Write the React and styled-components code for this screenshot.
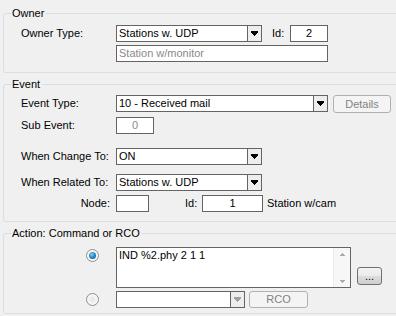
import React from 'react';
import styled, { createGlobalStyle } from 'styled-components';

const GlobalStyle = createGlobalStyle`
  html, body {
    margin: 0;
    padding: 0;
    background: #f0f0f0;
    overflow: hidden;
  }
  body {
    font-family: "Liberation Sans", Arial, sans-serif;
    font-size: 11px;
    color: #000;
  }
`;

const Page = styled.div`
  width: 396px;
  height: 316px;
  padding-top: 13px;
  box-sizing: border-box;
`;

const Group = styled.div`
  margin: ${p => p.$top || 0}px 0 0 3px;
  width: 410px;
  border: 1px solid #d5dfe5;
  border-radius: 3px;
  padding-bottom: ${p => p.$pb}px;
  box-sizing: border-box;
`;

const Legend = styled.div`
  margin: -7px 0 0 7px;
  padding: 0 2px 0 1px;
  height: 13px;
  line-height: 13px;
  width: fit-content;
  background: #f0f0f0;
`;

const Row = styled.div`
  display: flex;
  align-items: ${p => p.$align || 'center'};
  height: ${p => p.$h || 17}px;
  margin-top: ${p => p.$mt || 0}px;
  padding-left: 17px;
`;

const Label = styled.div`
  width: 95px;
  flex: none;
  box-sizing: border-box;
  text-align: ${p => (p.$right ? 'right' : 'left')};
  padding-right: ${p => (p.$right ? 6 : 0)}px;
  line-height: 13px;
`;

const SmallLabel = styled.div`
  width: ${p => p.$w}px;
  margin-left: ${p => p.$ml || 0}px;
  flex: none;
  line-height: 13px;
`;

const Field = styled.div`
  width: ${p => p.$w}px;
  height: 17px;
  margin-left: ${p => p.$ml || 0}px;
  box-sizing: border-box;
  flex: none;
  border: 1px solid #646464;
  background: #fff;
  color: ${p => (p.$disabled ? '#8a8a8a' : '#000')};
  line-height: 15px;
  padding: 0 2px;
  text-align: ${p => (p.$center ? 'center' : 'left')};
  white-space: nowrap;
  overflow: hidden;
`;

const ComboBox = styled.div`
  width: ${p => p.$w}px;
  height: 17px;
  box-sizing: border-box;
  flex: none;
  display: flex;
  border: 1px solid #646464;
  background: #fff;
`;

const ComboText = styled.div`
  flex: 1;
  line-height: 15px;
  padding-left: 2px;
  white-space: nowrap;
  overflow: hidden;
`;

const ComboArrow = styled.div`
  width: 14px;
  flex: none;
  border-left: 1px solid #646464;
  box-sizing: border-box;
  background: #ededed;
  display: flex;
  align-items: center;
  justify-content: center;
`;

const Button = styled.div`
  width: ${p => p.$w}px;
  height: ${p => p.$h || 18}px;
  margin-left: ${p => p.$ml || 0}px;
  align-self: ${p => p.$self || 'auto'};
  margin-top: ${p => p.$mt || 0}px;
  flex: none;
  box-sizing: border-box;
  border: 1px solid ${p => (p.$disabled ? '#adb2b5' : '#707070')};
  border-radius: 3px;
  background: ${p =>
    p.$disabled ? '#f4f4f4' : 'linear-gradient(#f2f2f2, #ebebeb 50%, #dddddd 51%, #cfcfcf)'};
  color: ${p => (p.$disabled ? '#838383' : '#000')};
  text-align: center;
  line-height: ${p => (p.$h || 18) - 2}px;
`;

const Radio = styled.div`
  width: 13px;
  height: 13px;
  box-sizing: border-box;
  border-radius: 50%;
  border: 1px solid #8e8f8f;
  background: radial-gradient(circle at 50% 50%, #e6e6e6 0%, #f6f6f6 60%, #fff 100%);
  margin-left: 65px;
  margin-top: ${p => p.$mt || 0}px;
  flex: none;
  display: flex;
  align-items: center;
  justify-content: center;
`;

const RadioDot = styled.div`
  width: 7px;
  height: 7px;
  border-radius: 50%;
  background: radial-gradient(circle at 40% 35%, #7fd0f5 0%, #2a8ec8 45%, #0b4f86 100%);
`;

const RadioCell = styled.div`
  width: 95px;
  flex: none;
  display: flex;
  align-items: ${p => (p.$top ? 'flex-start' : 'center')};
`;

const TextArea = styled.div`
  width: 235px;
  height: 41px;
  box-sizing: border-box;
  flex: none;
  display: flex;
  border: 1px solid #646464;
  background: #fff;
`;

const TextAreaBody = styled.div`
  flex: 1;
  padding: 1px 2px;
  line-height: 13px;
`;

const ScrollBar = styled.div`
  width: 17px;
  flex: none;
  background: #f7f7f7;
  border-left: 1px solid #ececec;
  display: flex;
  flex-direction: column;
  justify-content: space-between;
  align-items: center;
  padding: 5px 0 4px;
  box-sizing: border-box;
`;

const DownArrow = ({ color = '#000' }) => (
  <svg width="7" height="5" viewBox="0 0 7 5" shapeRendering="crispEdges">
    <rect x="0" y="0" width="7" height="1" fill={color} />
    <rect x="0" y="1" width="7" height="1" fill={color} />
    <rect x="1" y="2" width="5" height="1" fill={color} />
    <rect x="2" y="3" width="3" height="1" fill={color} />
    <rect x="3" y="4" width="1" height="1" fill={color} />
  </svg>
);

const SmallTri = ({ up }) => (
  <svg width="7" height="4" viewBox="0 0 7 4" shapeRendering="crispEdges">
    {up ? (
      <>
        <rect x="3" y="0" width="1" height="1" fill="#a8a8a8" />
        <rect x="2" y="1" width="3" height="1" fill="#a8a8a8" />
        <rect x="1" y="2" width="5" height="1" fill="#a8a8a8" />
      </>
    ) : (
      <>
        <rect x="1" y="1" width="5" height="1" fill="#a8a8a8" />
        <rect x="2" y="2" width="3" height="1" fill="#a8a8a8" />
        <rect x="3" y="3" width="1" height="1" fill="#a8a8a8" />
      </>
    )}
  </svg>
);

const Combo = ({ width, value, disabled }) => (
  <ComboBox $w={width}>
    <ComboText>{value}</ComboText>
    <ComboArrow>
      <DownArrow color={disabled ? '#a0a0a0' : '#000'} />
    </ComboArrow>
  </ComboBox>
);

const App = () => {
  return (
    <Page>
      <GlobalStyle />

      <Group $pb={10}>
        <Legend>Owner</Legend>
        <Row $mt={5}>
          <Label>Owner Type:</Label>
          <Combo width={146} value="Stations w. UDP" />
          <SmallLabel $w={18} $ml={10}>Id:</SmallLabel>
          <Field $w={38} $center>2</Field>
        </Row>
        <Row $mt={3}>
          <Label />
          <Field $w={212} $disabled>Station w/monitor</Field>
        </Row>
      </Group>

      <Group $top={11} $pb={9}>
        <Legend>Event</Legend>
        <Row $mt={4}>
          <Label>Event Type:</Label>
          <Combo width={212} value="10 - Received mail" />
          <Button $w={58} $ml={5} $disabled>Details</Button>
        </Row>
        <Row $mt={5}>
          <Label>Sub Event:</Label>
          <Field $w={38} $center $disabled>0</Field>
        </Row>
        <Row $mt={14}>
          <Label>When Change To:</Label>
          <Combo width={146} value="ON" />
        </Row>
        <Row $mt={9}>
          <Label>When Related To:</Label>
          <Combo width={146} value="Stations w. UDP" />
        </Row>
        <Row $mt={4}>
          <Label $right>Node:</Label>
          <Field $w={33} />
          <SmallLabel $w={17} $ml={36}>Id:</SmallLabel>
          <Field $w={61} $center>1</Field>
          <SmallLabel $w={80} $ml={4}>Station w/cam</SmallLabel>
        </Row>
      </Group>

      <Group $top={11} $pb={5}>
        <Legend>Action: Command or RCO</Legend>
        <Row $mt={7} $h={41} $align="flex-start">
          <RadioCell $top>
            <Radio $mt={2}>
              <RadioDot />
            </Radio>
          </RadioCell>
          <TextArea>
            <TextAreaBody>IND %2.phy 2 1 1</TextAreaBody>
            <ScrollBar>
              <SmallTri up />
              <SmallTri />
            </ScrollBar>
          </TextArea>
          <Button $w={25} $ml={6} $mt={20}>...</Button>
        </Row>
        <Row $mt={3}>
          <RadioCell>
            <Radio />
          </RadioCell>
          <Combo width={129} value="" disabled />
          <Button $w={59} $h={17} $ml={4} $disabled>RCO</Button>
        </Row>
      </Group>
    </Page>
  );
};

export default App;
